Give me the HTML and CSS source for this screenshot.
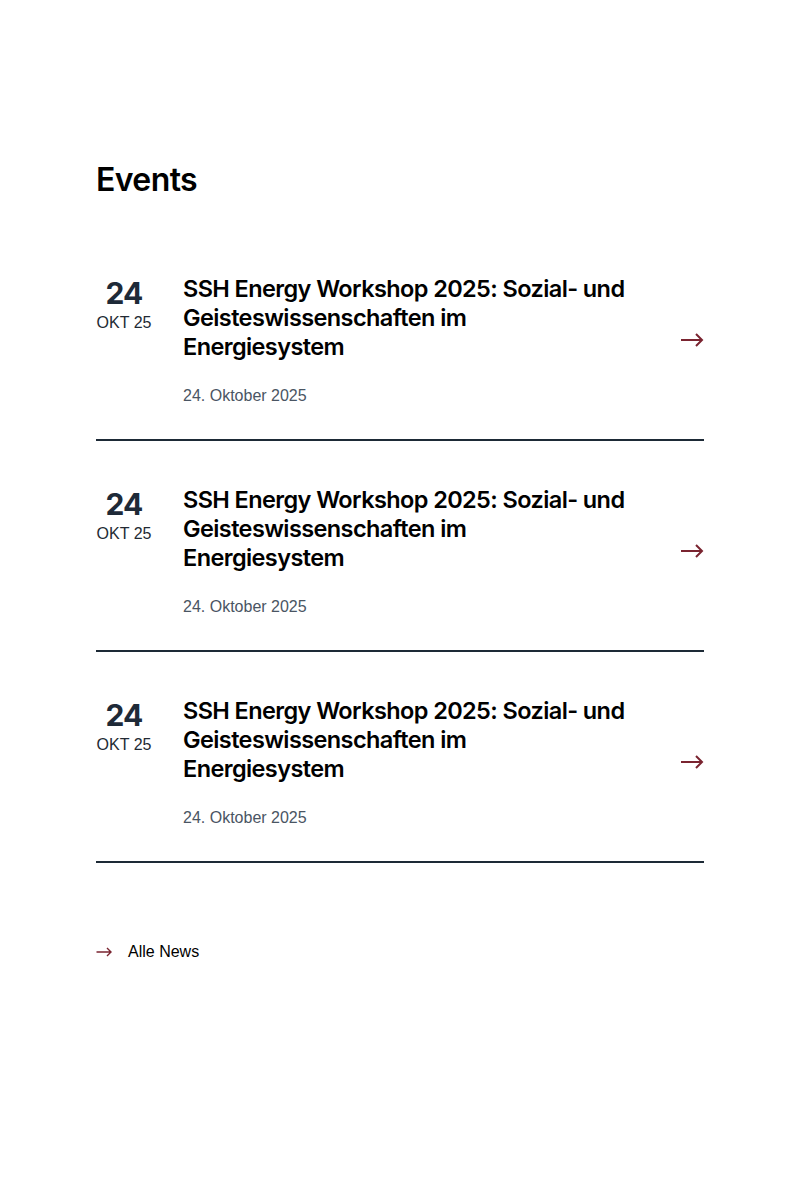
FILE: index.html
```html
<!DOCTYPE html>
<html lang="de">
<head>
<meta charset="utf-8">
<title>Events</title>
<link rel="stylesheet" href="styles.css">
</head>
<body>
<main class="events">
  <h2 class="events-title">Events</h2>
  <ul class="event-list">
    <li class="event">
      <div class="event-date"><span class="day">24</span><span class="month">OKT 25</span></div>
      <div class="event-body">
        <h3 class="event-name">SSH Energy Workshop 2025: Sozial- und Geisteswissenschaften im Energiesystem</h3>
        <p class="event-meta">24. Oktober 2025</p>
      </div>
      <svg class="arrow" width="24" height="14" viewBox="0 0 24 14" aria-hidden="true"><path d="M1 7H22M16 1L22 7L16 13" fill="none" stroke="#7a2430" stroke-width="2"/></svg>
    </li>
    <li class="event">
      <div class="event-date"><span class="day">24</span><span class="month">OKT 25</span></div>
      <div class="event-body">
        <h3 class="event-name">SSH Energy Workshop 2025: Sozial- und Geisteswissenschaften im Energiesystem</h3>
        <p class="event-meta">24. Oktober 2025</p>
      </div>
      <svg class="arrow" width="24" height="14" viewBox="0 0 24 14" aria-hidden="true"><path d="M1 7H22M16 1L22 7L16 13" fill="none" stroke="#7a2430" stroke-width="2"/></svg>
    </li>
    <li class="event">
      <div class="event-date"><span class="day">24</span><span class="month">OKT 25</span></div>
      <div class="event-body">
        <h3 class="event-name">SSH Energy Workshop 2025: Sozial- und Geisteswissenschaften im Energiesystem</h3>
        <p class="event-meta">24. Oktober 2025</p>
      </div>
      <svg class="arrow" width="24" height="14" viewBox="0 0 24 14" aria-hidden="true"><path d="M1 7H22M16 1L22 7L16 13" fill="none" stroke="#7a2430" stroke-width="2"/></svg>
    </li>
  </ul>
  <a class="all-link" href="#">
    <svg class="arrow-small" width="16" height="10" viewBox="0 0 16 10" aria-hidden="true"><path d="M0.5 5H15M11 1L15 5L11 9" fill="none" stroke="#7a2430" stroke-width="1.4"/></svg>
    <span>Alle News</span>
  </a>
</main>
</body>
</html>
```

FILE: styles.css
```css
html, body {
  margin: 0;
  padding: 0;
  background: #ffffff;
}

body {
  font-family: "Liberation Sans", Arial, sans-serif;
  color: #000;
}

.events {
  width: 608px;
  margin: 0 auto;
  padding-top: 160px;
}

.events-title {
  margin: 0;
  font-family: Inter, "Liberation Sans", sans-serif;
  font-weight: 600;
  font-size: 32px;
  line-height: 40px;
  letter-spacing: -0.6px;
  color: #000;
}

.event-list {
  list-style: none;
  margin: 0;
  padding: 0;
  margin-top: 74px;
}

.event {
  display: flex;
  align-items: center;
  padding: 0 0 33px 0;
  border-bottom: 2px solid #1d2a36;
}

.event + .event {
  padding-top: 44px;
}

.event-date {
  width: 56px;
  flex: none;
  align-self: flex-start;
  display: flex;
  flex-direction: column;
  align-items: center;
  margin-right: 31px;
}

.day {
  font-family: Inter, "Liberation Sans", sans-serif;
  font-weight: 700;
  font-size: 30px;
  line-height: 39px;
  letter-spacing: -0.8px;
  color: #1e2a38;
}

.month {
  font-size: 16px;
  line-height: 20px;
  color: #222a33;
}

.event-body {
  flex: 1;
}

.event-name {
  margin: 0;
  max-width: 446px;
  font-family: Inter, "Liberation Sans", sans-serif;
  font-weight: 600;
  font-size: 23.5px;
  line-height: 29px;
  letter-spacing: -0.6px;
  color: #000;
}

.event-meta {
  margin: 25px 0 0 0;
  font-size: 16px;
  line-height: 20px;
  color: #4a5563;
}

.arrow {
  flex: none;
  display: block;
}

.all-link {
  display: flex;
  align-items: center;
  gap: 16px;
  margin-top: 79px;
  font-size: 16px;
  line-height: 20px;
  color: #000;
  text-decoration: none;
}

.arrow-small {
  display: block;
  flex: none;
}
```
